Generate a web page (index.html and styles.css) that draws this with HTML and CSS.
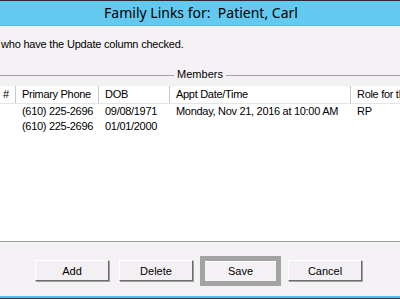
FILE: index.html
```html
<!DOCTYPE html>
<html lang="en">
<head>
    <meta charset="UTF-8">
    <meta name="viewport" content="width=device-width, initial-scale=1.0">
    <title>Family Links</title>
    <link rel="stylesheet" href="styles.css">
</head>
<body>

    <div class="titlebar">
        <span class="title-text">Family Links for:  Patient, Carl</span>
    </div>

    <div class="notice">who have the Update column checked.</div>

    <div class="groupbox">
        <span class="group-label">Members</span>
    </div>

    <div class="members-list">
        <div class="list-row list-header">
            <div class="cell col-num">#</div>
            <div class="cell col-phone">Primary Phone</div>
            <div class="cell col-dob">DOB</div>
            <div class="cell col-appt">Appt Date/Time</div>
            <div class="cell col-role">Role for the Family</div>
        </div>
        <div class="list-row">
            <div class="cell col-num"></div>
            <div class="cell col-phone">(610) 225-2696</div>
            <div class="cell col-dob">09/08/1971</div>
            <div class="cell col-appt">Monday, Nov 21, 2016 at 10:00 AM</div>
            <div class="cell col-role">RP</div>
        </div>
        <div class="list-row">
            <div class="cell col-num"></div>
            <div class="cell col-phone">(610) 225-2696</div>
            <div class="cell col-dob">01/01/2000</div>
            <div class="cell col-appt"></div>
            <div class="cell col-role"></div>
        </div>
    </div>

    <div class="button-bar">
        <button class="btn btn-add">Add</button>
        <button class="btn">Delete</button>
        <div class="btn-focus"><button class="btn btn-save">Save</button></div>
        <button class="btn">Cancel</button>
    </div>

</body>
</html>
```

FILE: styles.css
```css
html, body {
  margin: 0;
  padding: 0;
}

body {
  width: 400px;
  height: 299px;
  overflow: hidden;
  display: flex;
  flex-direction: column;
  background-color: #f5f2f5;
  font-family: "Liberation Sans", Arial, sans-serif;
  font-size: 11px;
  color: #000;
}

.titlebar {
  height: 26px;
  box-sizing: border-box;
  border-top: 1px solid #2b2b2b;
  border-bottom: 1px solid #5ab8dc;
  background-color: #63c9ef;
  display: flex;
  justify-content: center;
  align-items: center;
}

.title-text {
  font-family: "Noto Sans", sans-serif;
  font-size: 14px;
  white-space: pre;
  margin-left: 2px;
  margin-bottom: 1px;
}

.notice {
  height: 34px;
  padding-top: 12px;
  box-sizing: border-box;
  line-height: 13px;
  padding-left: 1px;
  letter-spacing: -0.2px;
}

.groupbox {
  height: 25px;
  padding-top: 4px;
  box-sizing: border-box;
  display: flex;
  align-items: center;
}

.groupbox::before,
.groupbox::after {
  content: "";
  flex: 1;
  border-top: 1px solid #a0a0a0;
  margin-top: 1px;
}

.group-label {
  padding: 0 3px;
  line-height: 13px;
}

.members-list {
  flex: 1;
  background-color: #fff;
  border-bottom: 1px solid #a0a0a0;
  letter-spacing: -0.3px;
}

.list-row {
  display: grid;
  grid-template-columns: 16px 83px 71px 181px 49px;
  height: 15px;
  line-height: 15px;
}

.list-header {
  height: 17px;
  line-height: 17px;
  border-top: 1px solid #f0f0f0;
  border-bottom: 1px solid #e5e5e5;
}

.cell {
  padding-left: 6px;
  white-space: nowrap;
  overflow: hidden;
}

.list-header .cell {
  border-right: 1px solid #c8c8c8;
  box-shadow: 1px 0 0 #fff;
}

.list-header .col-role {
  border-right: none;
  box-shadow: none;
}

.list-header .col-num {
  padding-left: 3px;
}

.button-bar {
  height: 56px;
  display: flex;
  align-items: center;
  gap: 7px;
  padding-left: 35px;
  padding-top: 3px;
  box-sizing: border-box;
  border-bottom: 2px solid #4fc1ea;
}

body::after {
  content: "";
  height: 1px;
  background-color: #3a3a3a;
}

.btn {
  width: 74px;
  height: 21px;
  padding: 0;
  background-color: #f3f0f3;
  border: 1px solid;
  border-color: #fff #6d6d6d #6d6d6d #fff;
  box-shadow: 1px 1px 0 #a0a0a0;
  font-family: "Liberation Sans", Arial, sans-serif;
  font-size: 11px;
  color: #000;
}

.btn-add {
  margin-right: 3px;
}

.btn-focus {
  border: 5px solid #a3a3a3;
  display: flex;
}

.btn-save {
  width: 71px;
  height: 20px;
  border: none;
  box-shadow: none;
  border-top: 1px solid #fff;
  background-color: #f5f2f5;
}
```
